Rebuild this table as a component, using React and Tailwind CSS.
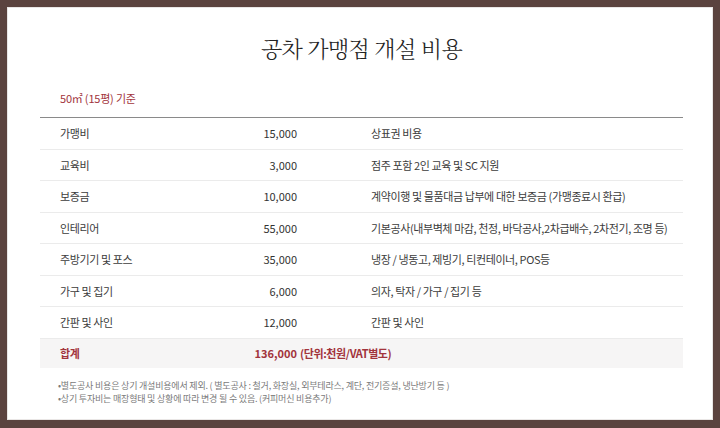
import React from 'react';

const rows = [
  { label: '가맹비', amount: '15,000', desc: '상표권 비용' },
  { label: '교육비', amount: '3,000', desc: '점주 포함 2인 교육 및 SC 지원' },
  { label: '보증금', amount: '10,000', desc: '계약이행 및 물품대금 납부에 대한 보증금 (가맹종료시 환급)' },
  { label: '인테리어', amount: '55,000', desc: '기본공사(내부벽체 마감, 천정, 바닥공사,2차급배수, 2차전기, 조명 등)' },
  { label: '주방기기 및 포스', amount: '35,000', desc: '냉장 / 냉동고, 제빙기, 티컨테이너, POS등' },
  { label: '가구 및 집기', amount: '6,000', desc: '의자, 탁자 / 가구 / 집기 등' },
  { label: '간판 및 사인', amount: '12,000', desc: '간판 및 사인' },
];

const App = () => {
  return (
    <div className="w-[720px] h-[428px] bg-[#5b433f] pt-[7px] pl-[7px] pr-[7px] pb-[8px] font-['Noto_Sans_CJK_KR',sans-serif]">
      <div className="w-full h-full bg-white shadow-[inset_0_0_0_1px_#e9e6e5] pt-[25px] pl-[33px] pr-[30px]">
        <h1 className="text-center text-[22px] leading-[32px] font-light text-[#222] tracking-[-0.6px] font-['Noto_Serif_CJK_KR','Noto_Sans_CJK_KR',serif]">
          공차 가맹점 개설 비용
        </h1>

        <div className="mt-[26px] pl-[20px] text-[11px] leading-[16px] text-[#a2343c] tracking-[-0.2px]">
          50㎡ (15평) 기준
        </div>

        <div className="mt-[11px] border-t border-[#8a8a8a] text-[11px] text-[#3c3c3c] tracking-[-0.4px] whitespace-nowrap">
          {rows.map((r) => (
            <div key={r.label} className="flex items-center h-[31.5px] border-b border-[#ebebeb]">
              <div className="w-[160px] pl-[20px]">{r.label}</div>
              <div className="w-[97px] text-right text-[#333] tracking-normal">{r.amount}</div>
              <div className="flex-1 pl-[74px]">{r.desc}</div>
            </div>
          ))}
          <div className="flex items-center h-[29px] bg-[#f6f5f5] font-bold text-[#a2343c]">
            <div className="w-[160px] pl-[20px]">합계</div>
            <div className="w-[97px] text-right tracking-normal">136,000</div>
            <div className="flex-1 pl-[3px]">(단위:천원/VAT별도)</div>
          </div>
        </div>

        <div className="mt-[11px] pl-[18px] text-[9px] leading-[13px] text-[#7a7a7a] tracking-[-0.2px] whitespace-nowrap">
          <p>•별도공사 비용은 상기 개설비용에서 제외. ( 별도공사 : 철거, 화장실, 외부테라스, 계단, 전기증설, 냉난방기 등 )</p>
          <p>•상기 투자비는 매장형태 및 상황에 따라 변경 될 수 있음. (커피머신 비용추가)</p>
        </div>
      </div>
    </div>
  );
};

export default App;
